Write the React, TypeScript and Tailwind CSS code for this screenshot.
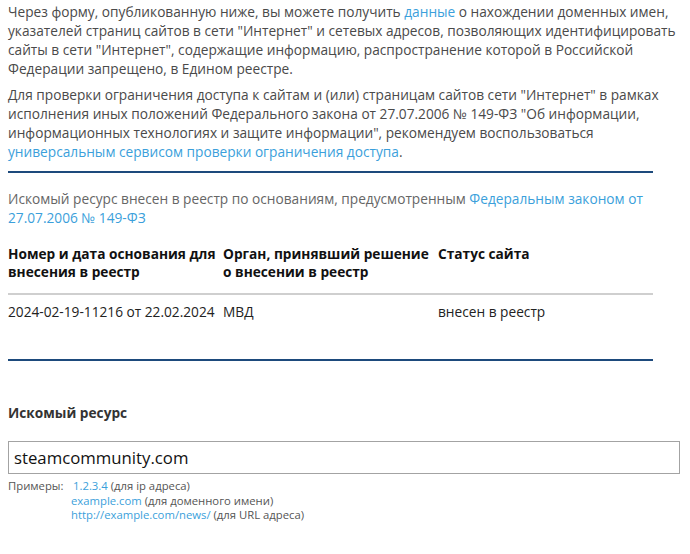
const LINK = "text-[#3b9fdb]";

const EXAMPLES = [
  { href: "1.2.3.4", note: "(для ip адреса)", first: true },
  { href: "example.com", note: "(для доменного имени)" },
  { href: "http://example.com/news/", note: "(для URL адреса)" },
];

export default function App() {
  return (
    <div className="min-h-[554px] bg-white px-2 pt-[2px] font-['Open_Sans',sans-serif] text-[13.7px]">
      {/* intro */}
      <div className="w-[670px]">
        <p className="leading-[19px] text-[#4a4a4a]">
          Через форму, опубликованную ниже, вы можете получить <span className={LINK}>данные</span> о нахождении доменных имен, указателей страниц сайтов в сети "Интернет" и сетевых адресов, позволяющих идентифицировать сайты в сети "Интернет", содержащие информацию, распространение которой в Российской Федерации запрещено, в Едином реестре.
        </p>
        <p className="mt-[7px] leading-[19px] text-[#4a4a4a]">
          Для проверки ограничения доступа к сайтам и (или) страницам сайтов сети "Интернет" в рамках исполнения иных положений Федерального закона от 27.07.2006 № 149-ФЗ "Об информации, информационных технологиях и защите информации", рекомендуем воспользоваться <span className={LINK}>универсальным сервисом проверки ограничения доступа</span>.
        </p>
      </div>

      <div className="w-[645px]">
        <div className="mt-[10px] border-t-2 border-[#1d4a7c]" />

        {/* result */}
        <p className="mt-[16px] leading-[19px] text-[#666]">
          Искомый ресурс внесен в реестр по основаниям, предусмотренным <span className={LINK}>Федеральным законом от 27.07.2006 № 149-ФЗ</span>
        </p>

        <div className="mt-[18px] grid grid-cols-3 leading-[18px]">
          <div className="pr-[1px] font-bold text-[#111]">Номер и дата основания для внесения в реестр</div>
          <div className="pr-[1px] font-bold text-[#111]">Орган, принявший решение о внесении в реестр</div>
          <div className="pr-[1px] font-bold text-[#111]">Статус сайта</div>
        </div>
        <div className="mt-[12px] border-t-2 border-[#cfcfcf]" />
        <div className="grid grid-cols-3 pt-[8px] pb-[38px] leading-[18px] text-[#222]">
          <div>2024-02-19-11216 от 22.02.2024</div>
          <div>МВД</div>
          <div>внесен в реестр</div>
        </div>
        <div className="border-t-2 border-[#1d4a7c]" />
      </div>

      {/* search form */}
      <div className="mt-[42px] font-bold leading-[19px] text-[#333]">Искомый ресурс</div>
      <div className="mt-[19px] flex h-[33px] w-[672px] items-center border border-[#a3a3a3] px-[5px] text-[16.75px] text-[#111]">
        steamcommunity.com
      </div>
      <div className="mt-[5px] flex text-[11.3px] leading-[14.5px] text-[#555]">
        <div className="w-[63px]">Примеры:</div>
        <div className="flex flex-col">
          {EXAMPLES.map((e) => (
            <div key={e.href} className={e.first ? "ml-[2px]" : ""}>
              <span className={LINK}>{e.href}</span> {e.note}
            </div>
          ))}
        </div>
      </div>
    </div>
  );
}
